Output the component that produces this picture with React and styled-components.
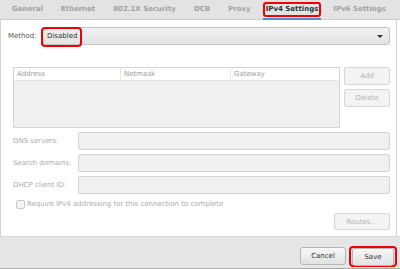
import React from "react";
import styled, { createGlobalStyle, css } from "styled-components";

const GlobalStyle = createGlobalStyle`
  html, body { margin: 0; padding: 0; background: #ffffff; }
  body { font-family: "DejaVu Sans", "Noto Sans", sans-serif; font-size: 7px; color: #2e3436; }
  * { box-sizing: border-box; }
`;

const Window = styled.div`
  width: 400px;
  height: 269px;
  display: flex;
  flex-direction: column;
  border-bottom: 1px solid #a9a9a9;
  background: #ffffff;
`;

const TabBar = styled.div`
  height: 20px;
  flex: none;
  display: flex;
  align-items: stretch;
  padding-left: 3px;
  background: #e3e3e3;
  border-bottom: 1px solid #cdcdcd;
`;

const Tab = styled.div`
  position: relative;
  display: flex;
  align-items: center;
  padding: 0 9px 1px;
  font-weight: bold;
  color: #a2a2a2;
  white-space: nowrap;
  ${(p) =>
    p.$active &&
    css`
      padding: 0 6px 1px;
      color: #2e3436;
      &::after {
        content: "";
        position: absolute;
        left: 3px;
        right: 3px;
        bottom: -1px;
        height: 2px;
        background: #4a90d9;
      }
      &::before {
        content: "";
        position: absolute;
        left: 3px;
        right: 3px;
        top: 2px;
        bottom: 2px;
        border: 2px solid #ee0000;
        border-radius: 3px;
        z-index: 1;
      }
    `}
`;

const Panel = styled.div`
  flex: 1;
  width: 397px;
  display: flex;
  flex-direction: column;
  padding: 7px 6px 0 7px;
  border-left: 1px solid #d2d2d2;
  border-right: 1px solid #d2d2d2;
  background: #ffffff;
`;

const MethodRow = styled.div`
  display: flex;
  align-items: center;
`;

const Label = styled.div`
  width: ${(p) => p.$w || 34}px;
  flex: none;
  color: ${(p) => (p.$disabled ? "#ababab" : "#555753")};
  white-space: nowrap;
`;

const Combo = styled.div`
  position: relative;
  flex: 1;
  height: 18px;
  display: flex;
  align-items: center;
  padding-left: 4px;
  border: 1px solid #c3c3c3;
  border-radius: 3px;
  background: linear-gradient(#f2f2f2, #e3e3e3);
  color: #2e3436;
`;

const RedMark = styled.div`
  position: absolute;
  left: -2px;
  top: -1px;
  width: 41px;
  height: 20px;
  border: 2px solid #ee0000;
  border-radius: 4px;
`;

const Arrow = styled.div`
  position: absolute;
  right: 6px;
  top: 7px;
  width: 0;
  height: 0;
  border-left: 3px solid transparent;
  border-right: 3px solid transparent;
  border-top: 3px solid #2e3436;
`;

const AddressSection = styled.div`
  margin: 22px 0 0 5px;
  display: flex;
  gap: 4px;
`;

const Table = styled.div`
  flex: 1;
  height: 61px;
  border: 1px solid #d4d4d4;
  background: #f0f0f0;
`;

const HeaderRow = styled.div`
  height: 13px;
  display: grid;
  grid-template-columns: 106px 110px 1fr;
  background: #ffffff;
  border-bottom: 1px solid #e2e2e2;
`;

const HeaderCell = styled.div`
  display: flex;
  align-items: center;
  padding-left: 3px;
  color: #9d9d9d;
  border-left: ${(p) => (p.$first ? "none" : "1px solid #e6e6e6")};
`;

const SideButtons = styled.div`
  width: 46px;
  display: flex;
  flex-direction: column;
  gap: 4px;
`;

const FlatButton = styled.div`
  height: ${(p) => p.$h || 18}px;
  width: ${(p) => (p.$w ? p.$w + "px" : "auto")};
  display: flex;
  align-items: center;
  justify-content: center;
  border: 1px solid #d6d6d6;
  border-radius: 2px;
  background: #f3f3f3;
  color: #b3b3b3;
`;

const Fields = styled.div`
  margin: 4px 0 0 5px;
  display: grid;
  grid-template-columns: 65px 1fr;
  grid-auto-rows: 18px;
  row-gap: 4px;
  align-items: center;
`;

const Input = styled.div`
  height: 18px;
  border: 1px solid #d4d4d4;
  border-radius: 2px;
  background: #f0f0f0;
`;

const CheckRow = styled.div`
  margin: 5px 0 0 8px;
  height: 10px;
  display: flex;
  align-items: center;
  gap: 2px;
  color: #ababab;
`;

const CheckBox = styled.div`
  width: 9px;
  height: 9px;
  border: 1px solid #c9c9c9;
  border-radius: 2px;
  background: #f4f4f4;
`;

const RoutesRow = styled.div`
  margin-top: 4px;
  display: flex;
  justify-content: flex-end;
`;

const BottomBar = styled.div`
  height: 32px;
  flex: none;
  display: flex;
  justify-content: flex-end;
  align-items: flex-start;
  gap: 3px;
  padding: 9px 3px 0 0;
  background: #e6e6e6;
  border-top: 1px solid #d6d6d6;
`;

const DialogButton = styled.div`
  width: ${(p) => p.$w}px;
  height: 18px;
  margin-top: ${(p) => p.$mt || 0}px;
  display: flex;
  align-items: center;
  justify-content: center;
  border: 1px solid #b5b5b5;
  border-radius: 3px;
  background: linear-gradient(#f7f7f7, #e2e2e2);
  color: #2e3436;
`;

const SaveMark = styled.div`
  width: 48px;
  height: 21px;
  padding: 0 1px;
  display: flex;
  align-items: center;
  border: 2px solid #ee0000;
  border-radius: 4px;
`;

const tabs = ["General", "Ethernet", "802.1X Security", "DCB", "Proxy", "IPv4 Settings", "IPv6 Settings"];

export default function App() {
  return (
    <>
      <GlobalStyle />
      <Window>
        <TabBar>
          {tabs.map((t) => (
            <Tab key={t} $active={t === "IPv4 Settings"}>
              {t}
            </Tab>
          ))}
        </TabBar>
        <Panel>
          <MethodRow>
            <Label>Method:</Label>
            <Combo>
              Disabled
              <RedMark />
              <Arrow />
            </Combo>
          </MethodRow>
          <AddressSection>
            <Table>
              <HeaderRow>
                <HeaderCell $first>Address</HeaderCell>
                <HeaderCell>Netmask</HeaderCell>
                <HeaderCell>Gateway</HeaderCell>
              </HeaderRow>
            </Table>
            <SideButtons>
              <FlatButton>Add</FlatButton>
              <FlatButton>Delete</FlatButton>
            </SideButtons>
          </AddressSection>
          <Fields>
            <Label $w={65} $disabled>DNS servers:</Label>
            <Input />
            <Label $w={65} $disabled>Search domains:</Label>
            <Input />
            <Label $w={65} $disabled>DHCP client ID:</Label>
            <Input />
          </Fields>
          <CheckRow>
            <CheckBox />
            <span>Require IPv4 addressing for this connection to complete</span>
          </CheckRow>
          <RoutesRow>
            <FlatButton $w={56} $h={17}>Routes…</FlatButton>
          </RoutesRow>
        </Panel>
        <BottomBar>
          <DialogButton $w={46} $mt={1}>Cancel</DialogButton>
          <SaveMark>
            <DialogButton $w={42}>Save</DialogButton>
          </SaveMark>
        </BottomBar>
      </Window>
    </>
  );
}
